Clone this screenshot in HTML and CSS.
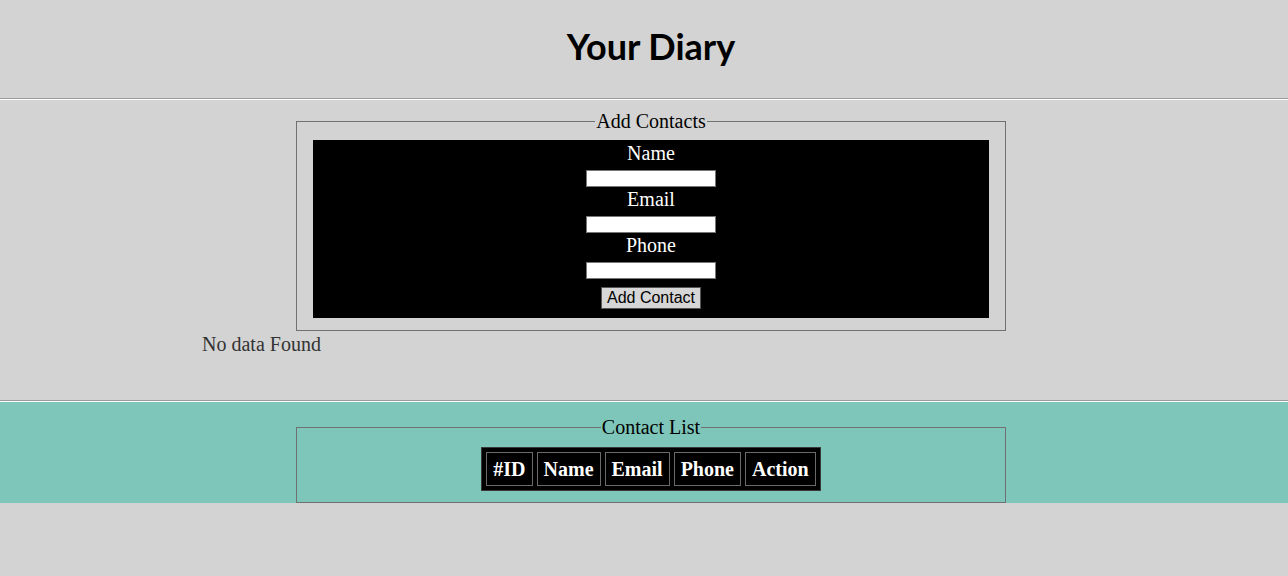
FILE: index.html
```html
<!DOCTYPE html>
<html lang="en">
<head>
<meta charset="utf-8">
<title>Your Diary</title>
<link rel="stylesheet" href="styles.css">
</head>
<body>
<header class="top">
  <h1 class="title">Your Diary</h1>
</header>
<hr class="rule">
<main class="add-section">
  <fieldset class="box">
    <legend class="box-legend">Add Contacts</legend>
    <form class="form">
      <label class="form-label" for="name">Name</label>
      <input class="form-input" id="name" type="text">
      <label class="form-label" for="email">Email</label>
      <input class="form-input" id="email" type="text">
      <label class="form-label" for="phone">Phone</label>
      <input class="form-input" id="phone" type="text">
      <button class="form-button" type="button">Add Contact</button>
    </form>
  </fieldset>
  <p class="empty">No data Found</p>
</main>
<hr class="rule">
<section class="list-section">
  <fieldset class="box list-box">
    <legend class="box-legend">Contact List</legend>
    <table class="contacts">
      <thead>
        <tr>
          <th class="cell">#ID</th>
          <th class="cell">Name</th>
          <th class="cell">Email</th>
          <th class="cell">Phone</th>
          <th class="cell">Action</th>
        </tr>
      </thead>
    </table>
  </fieldset>
</section>
</body>
</html>
```

FILE: styles.css
```css
html, body {
  margin: 0;
  padding: 0;
  background: #d3d3d3;
  font-family: "Liberation Serif", "DejaVu Serif", serif;
}

.top {
  height: 98px;
  padding-left: 14px;
  box-sizing: border-box;
  padding-top: 21px;
}

.title {
  margin: 0;
  text-align: center;
  font-family: Lato, "Open Sans", sans-serif;
  font-weight: 700;
  font-size: 36px;
  line-height: 50px;
  color: #000;
}

.rule {
  margin: 0;
  height: 0;
  border: 0;
  border-top: 1px solid #9a9a9a;
  border-bottom: 1px solid #ffffff;
}

.add-section {
  padding: 10px 0 0 14px;
  height: 300px;
  box-sizing: border-box;
}

.box {
  width: 710px;
  box-sizing: border-box;
  margin: 0 auto;
  border: 1px solid #707070;
  padding: 8px 16px 12px 16px;
}

.box-legend {
  margin: 0 auto;
  padding: 0 1px;
  font-size: 20px;
  line-height: 22px;
  color: #000;
}

.form {
  background: #000;
  display: flex;
  flex-direction: column;
  align-items: center;
  padding: 2px 0 9px;
}

.form-label {
  color: #fff;
  font-size: 20px;
  line-height: 22px;
}

.form-input {
  width: 130px;
  height: 17px;
  box-sizing: border-box;
  margin: 6px 0 1px;
  border: 1px solid #767676;
  background: #fff;
  padding: 0;
}

.form-button {
  margin-top: 7px;
  height: 22px;
  padding: 0 5px;
  font-family: "Liberation Sans", Arial, sans-serif;
  font-size: 16px;
  background: #d6d6d6;
  border: 1px solid #555;
  color: #000;
}

.empty {
  margin: 2px 0 0 188px;
  font-size: 20px;
  line-height: 22px;
  color: #333;
}

.list-section {
  background: #7ec6b9;
  padding: 14px 0 0 14px;
}

.list-box {
  padding: 9px 16px 11px;
  display: flex;
  justify-content: center;
}

.contacts {
  margin: 0 auto;
  background: #000;
  border: 1px solid #3a3a3a;
  border-spacing: 4px;
}

.cell {
  border: 1px solid #6a6a6a;
  padding: 5px 6px;
  color: #fff;
  font-size: 20px;
  line-height: 22px;
  font-weight: 700;
}
```
